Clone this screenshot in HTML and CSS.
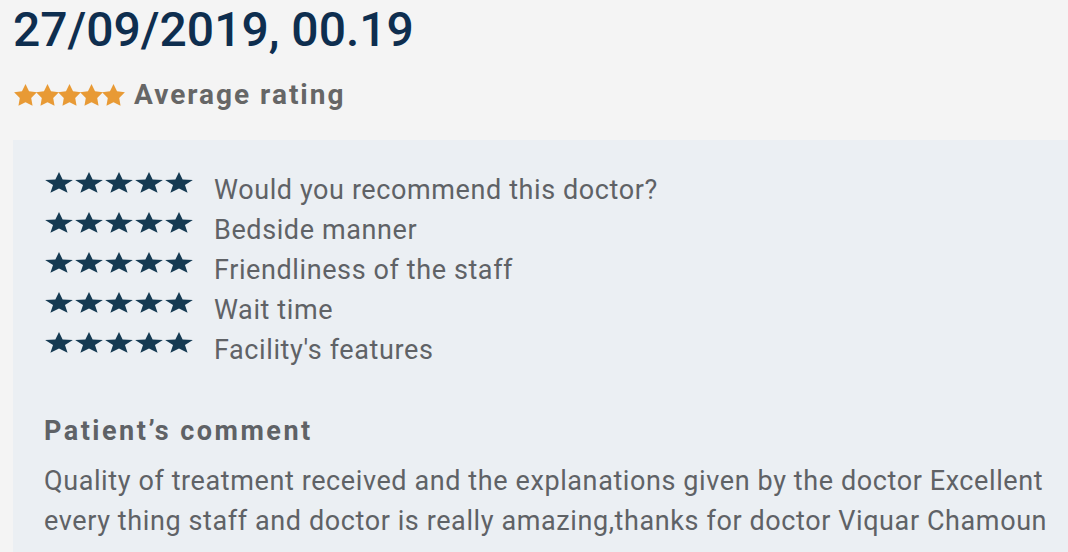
FILE: index.html
```html
<!DOCTYPE html>
<html lang="en">
<head>
    <meta charset="UTF-8">
    <title>Review</title>
    <link rel="stylesheet" href="styles.css">
</head>
<body>
    <svg width="0" height="0" class="defs">
        <defs>
            <!-- 细长的星星 -->
            <symbol id="star" viewBox="-9.6 -10 19.2 18.2" preserveAspectRatio="none">
                <polygon points="0,-10 2.5,-3.4 9.51,-3.09 4.1,1.35 5.88,8.09 0,4.3 -5.88,8.09 -4.1,1.35 -9.51,-3.09 -2.5,-3.4"/>
            </symbol>
            <!-- 胖的星星 -->
            <symbol id="star-fat" viewBox="-9.6 -10 19.2 18.2" preserveAspectRatio="none">
                <polygon points="0,-10 2.94,-4.05 9.51,-3.09 4.76,1.55 5.88,8.09 0,5 -5.88,8.09 -4.76,1.55 -9.51,-3.09 -2.94,-4.05"/>
            </symbol>
        </defs>
    </svg>

    <div class="review">
        <!-- 日期 -->
        <h1 class="date">27/09/2019, 00.19</h1>

        <!-- 平均评分 -->
        <div class="average">
            <span class="stars stars-orange"><svg><use href="#star-fat"/></svg><svg><use href="#star-fat"/></svg><svg><use href="#star-fat"/></svg><svg><use href="#star-fat"/></svg><svg><use href="#star-fat"/></svg></span>
            <span class="average-label">Average rating</span>
        </div>

        <!-- 详细评分 -->
        <div class="panel">
            <ul class="ratings">
                <li>
                    <span class="stars stars-navy"><svg><use href="#star"/></svg><svg><use href="#star"/></svg><svg><use href="#star"/></svg><svg><use href="#star"/></svg><svg><use href="#star"/></svg></span>
                    <span>Would you recommend this doctor?</span>
                </li>
                <li>
                    <span class="stars stars-navy"><svg><use href="#star"/></svg><svg><use href="#star"/></svg><svg><use href="#star"/></svg><svg><use href="#star"/></svg><svg><use href="#star"/></svg></span>
                    <span>Bedside manner</span>
                </li>
                <li>
                    <span class="stars stars-navy"><svg><use href="#star"/></svg><svg><use href="#star"/></svg><svg><use href="#star"/></svg><svg><use href="#star"/></svg><svg><use href="#star"/></svg></span>
                    <span>Friendliness of the staff</span>
                </li>
                <li>
                    <span class="stars stars-navy"><svg><use href="#star"/></svg><svg><use href="#star"/></svg><svg><use href="#star"/></svg><svg><use href="#star"/></svg><svg><use href="#star"/></svg></span>
                    <span>Wait time</span>
                </li>
                <li>
                    <span class="stars stars-navy"><svg><use href="#star"/></svg><svg><use href="#star"/></svg><svg><use href="#star"/></svg><svg><use href="#star"/></svg><svg><use href="#star"/></svg></span>
                    <span>Facility's features</span>
                </li>
            </ul>

            <h2 class="comment-title">Patient’s comment</h2>
            <p class="comment">Quality of treatment received and the explanations given by the doctor Excellent every thing staff and doctor is really amazing,thanks for doctor Viquar Chamoun</p>
        </div>
    </div>
</body>
</html>
```

FILE: styles.css
```css
*{
    margin: 0;
    padding: 0;
    box-sizing: border-box;
}

body{
    background-color: #f4f4f4;
    font-family: Roboto, "Liberation Sans", sans-serif;
    color: #5f6266;
    overflow: hidden;
}

.defs{
    position: absolute;
}

.review{
    padding-left: 13px;
}

/* 日期 */
.date{
    font-size: 48px;
    font-weight: 500;
    color: #0e2e4f;
    line-height: 60px;
}

/* 平均评分 */
.average{
    display: flex;
    align-items: center;
    gap: 10px;
    height: 40px;
    margin-top: 15px;
    margin-bottom: 25px;
    padding-left: 1px;
}
.stars{
    display: flex;
}
.stars-orange svg{
    width: 23px;
    height: 22px;
    margin-right: -1px;
    fill: #e89a35;
}
.average-label{
    font-size: 28px;
    line-height: 40px;
    font-weight: 700;
    letter-spacing: 2px;
    color: #666666;
}

/* 面板 */
.panel{
    background-color: #ebeff3;
    padding: 30px 0 0 31px;
    height: 412px;
}

.ratings{
    list-style: none;
}
.ratings li{
    display: flex;
    align-items: flex-start;
    gap: 21px;
    height: 40px;
    font-size: 27px;
    line-height: 40px;
    letter-spacing: 0.6px;
}
.stars-navy{
    gap: 2px;
    margin-top: 2px;
    padding-left: 1px;
}
.stars-navy svg{
    width: 28px;
    height: 21px;
    fill: #153a52;
}

.comment-title{
    font-size: 27px;
    font-weight: 700;
    letter-spacing: 2.5px;
    color: #5f6266;
    margin-top: 41px;
    line-height: 40px;
}
.comment{
    font-size: 27px;
    line-height: 40px;
    letter-spacing: 0.6px;
    padding-top: 10px;
}
```
